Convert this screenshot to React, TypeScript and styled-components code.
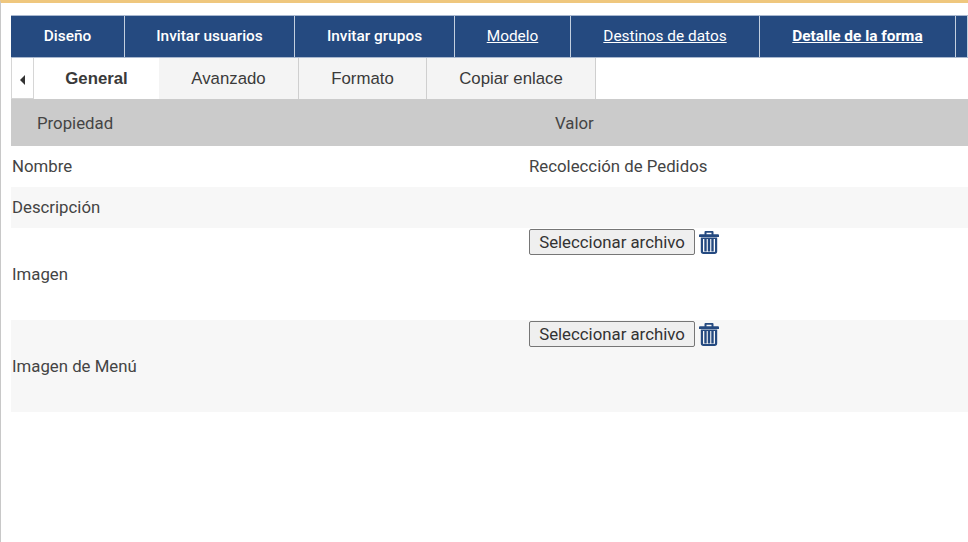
import React from "react";
import styled, { createGlobalStyle } from "styled-components";

const Global = createGlobalStyle`
  html, body { margin: 0; padding: 0; background: #fff; }
  body { font-family: Roboto, "Liberation Sans", sans-serif; color: #333; }
`;

const Page = styled.div`
  width: 968px;
  height: 542px;
  overflow: hidden;
  box-sizing: border-box;
  border-top: 3px solid #efc77e;
  border-left: 1px solid #c8c8c8;
  padding: 12px 0 0 10px;
`;

const Nav = styled.nav`
  display: flex;
  height: 43px;
  box-sizing: border-box;
  background: #254a80;
  border-top: 1px solid #a9b8cf;
  border-bottom: 1px solid #a9b8cf;
`;

const NavItem = styled.a<{ $w: number; $link?: boolean; $strong?: boolean }>`
  flex: 0 0 ${(p) => p.$w}px;
  box-sizing: border-box;
  display: flex;
  align-items: center;
  justify-content: center;
  padding-bottom: 2px;
  border-right: 1px solid #c3cfdf;
  color: #fff;
  font-size: 15.4px;
  font-weight: ${(p) => (p.$strong ? 700 : p.$link ? 400 : 500)};
  text-decoration: ${(p) => (p.$link ? "underline" : "none")};
`;

const Tabs = styled.div`
  display: flex;
  height: 41px;
  font-family: "Liberation Sans", Arial, sans-serif;
  font-size: 16.8px;
`;

const Arrow = styled.div`
  flex: 0 0 23px;
  height: 41px;
  box-sizing: border-box;
  border: 1px solid #d6d6d6;
  border-top: 0;
  display: flex;
  align-items: center;
  justify-content: center;
  &::before {
    content: "";
    border-style: solid;
    border-width: 5px 5px 5px 0;
    border-color: transparent #333 transparent transparent;
    margin-top: 3px;
  }
`;

const Tab = styled.div<{ $w: number; $active?: boolean }>`
  flex: 0 0 ${(p) => p.$w}px;
  box-sizing: border-box;
  display: flex;
  align-items: center;
  justify-content: center;
  color: #3a3a3a;
  background: ${(p) => (p.$active ? "#fff" : "#f4f4f4")};
  font-weight: ${(p) => (p.$active ? 700 : 400)};
  border-right: ${(p) => (p.$active ? "0" : "1px solid #cfcfcf")};
`;

const Head = styled.div`
  display: grid;
  grid-template-columns: 518px 1fr;
  height: 47px;
  align-items: center;
  background: #cbcbcb;
  color: #444;
  font-size: 16.8px;
`;

const HeadCell = styled.div`
  padding-left: 26px;
`;

const Row = styled.div<{ $h: number; $alt?: boolean; $short?: boolean }>`
  display: grid;
  grid-template-columns: 518px 1fr;
  box-sizing: border-box;
  height: ${(p) => p.$h}px;
  padding-bottom: ${(p) => (p.$short ? "2px" : "0")};
  background: ${(p) => (p.$alt ? "#f7f7f7" : "#fff")};
  font-size: 16.8px;
  color: #444;
`;

const Cell = styled.div<{ $top?: boolean }>`
  display: flex;
  align-items: ${(p) => (p.$top ? "flex-start" : "center")};
  padding-top: ${(p) => (p.$top ? "1px" : "0")};
`;

const Label = styled(Cell)`
  padding-left: 1px;
`;

const FileButton = styled.button`
  box-sizing: border-box;
  width: 166px;
  height: 26px;
  padding: 0;
  border: 1px solid #767676;
  border-radius: 2px;
  background: #efefef;
  color: #333;
  font-family: Roboto, sans-serif;
  font-size: 16.8px;
`;

const TrashIcon = styled.svg`
  width: 20px;
  height: 23px;
  margin: 2px 0 0 4px;
  fill: #254a80;
`;

const Trash = () => (
  <TrashIcon viewBox="0 0 20 23">
    <path d="M6.500 0h7a1 1 0 0 1 1 1v2.200h4.500a1 1 0 0 1 1 1v1.800H0V4.200a1 1 0 0 1 1-1h4.500V1a1 1 0 0 1 1-1zm1 1.800v1.400h5V1.800z" fillRule="evenodd" />
    <path d="M1.800 6.500h16.400V20.300a2.700 2.700 0 0 1-2.700 2.700h-11a2.700 2.700 0 0 1-2.700-2.700zM4 8v12.300c0 .4.300.6.600.6h10.800c.3 0 .6-.2.600-.6V8z" fillRule="evenodd" />
    <rect x="5.300" y="8" width="2.400" height="12.500" />
    <rect x="8.800" y="8" width="2.400" height="12.500" />
    <rect x="12.300" y="8" width="2.400" height="12.500" />
  </TrashIcon>
);

const navItems = [
  { t: "Diseño", w: 114 },
  { t: "Invitar usuarios", w: 170 },
  { t: "Invitar grupos", w: 160 },
  { t: "Modelo", w: 116, link: true },
  { t: "Destinos de datos", w: 189, link: true },
  { t: "Detalle de la forma", w: 196, link: true, strong: true },
  { t: "", w: 12 },
];

const FileCell = () => (
  <Cell $top>
    <FileButton>Seleccionar archivo</FileButton>
    <Trash />
  </Cell>
);

export default function App() {
  return (
    <Page>
      <Global />
      <Nav>
        {navItems.map((n, i) => (
          <NavItem key={i} $w={n.w} $link={n.link} $strong={n.strong}>
            {n.t}
          </NavItem>
        ))}
      </Nav>
      <Tabs>
        <Arrow />
        <Tab $w={125} $active>General</Tab>
        <Tab $w={140}>Avanzado</Tab>
        <Tab $w={128}>Formato</Tab>
        <Tab $w={169}>Copiar enlace</Tab>
      </Tabs>
      <Head>
        <HeadCell>Propiedad</HeadCell>
        <HeadCell>Valor</HeadCell>
      </Head>
      <Row $h={41} $short>
        <Label>Nombre</Label>
        <Cell>Recolección de Pedidos</Cell>
      </Row>
      <Row $h={41} $alt $short>
        <Label>Descripción</Label>
        <Cell />
      </Row>
      <Row $h={92}>
        <Label>Imagen</Label>
        <FileCell />
      </Row>
      <Row $h={92} $alt>
        <Label>Imagen de Menú</Label>
        <FileCell />
      </Row>
    </Page>
  );
}
